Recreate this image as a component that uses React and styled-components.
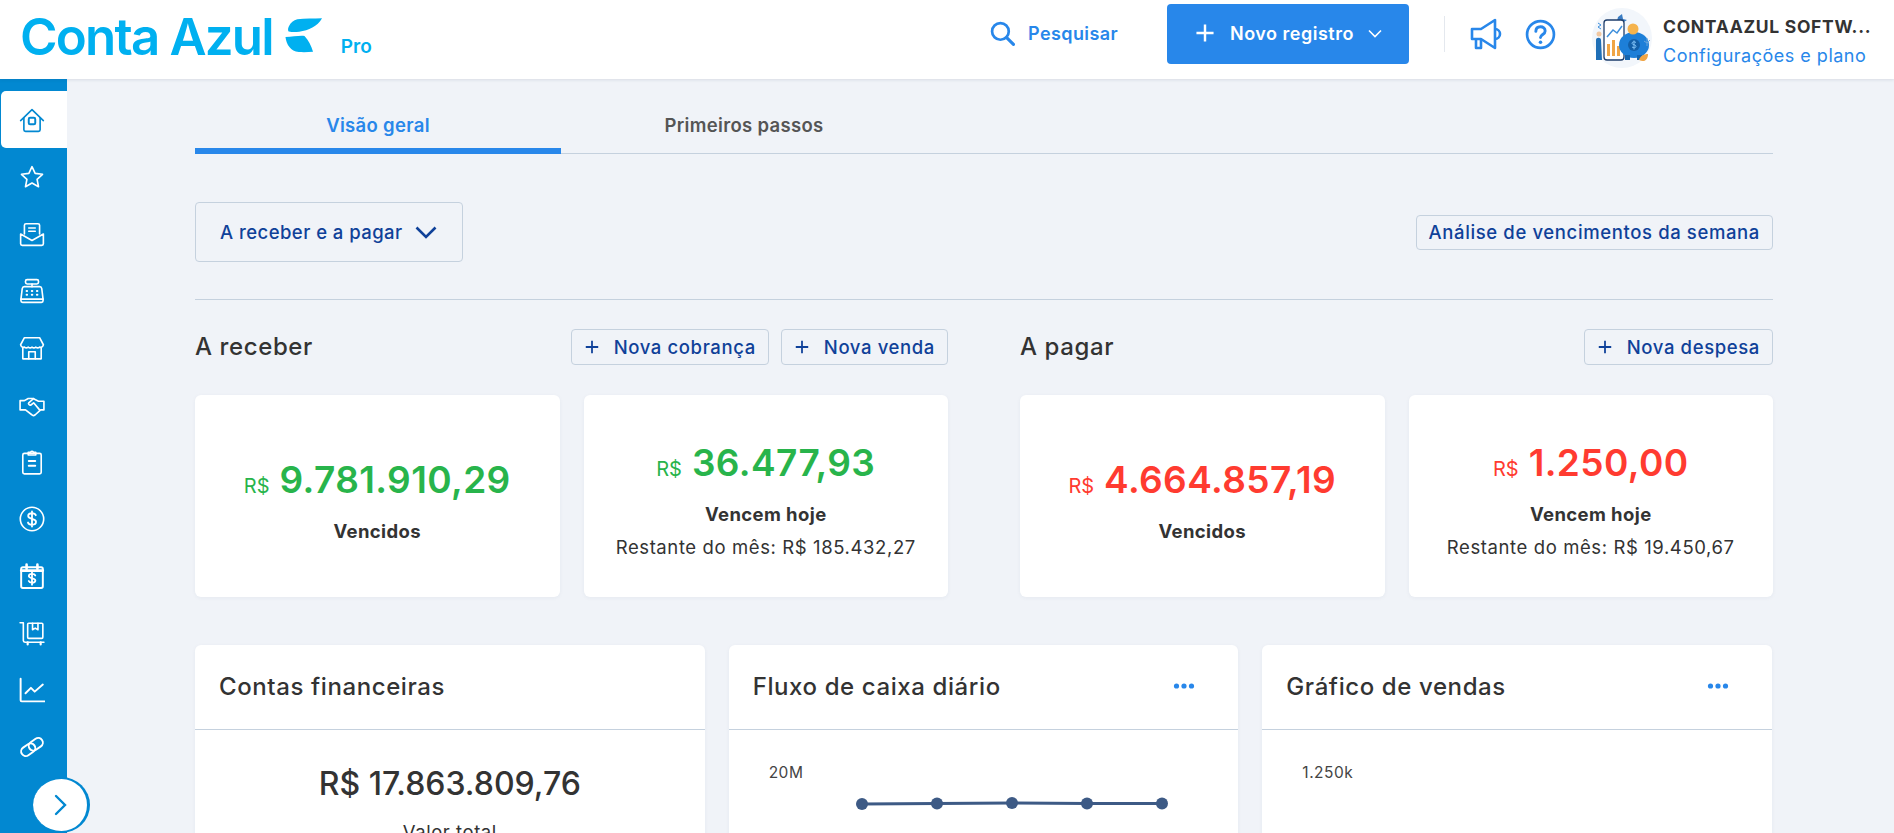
import React from 'react';
import styled, { createGlobalStyle } from 'styled-components';

const Global = createGlobalStyle`
  * { box-sizing: border-box; }
  html, body { margin: 0; padding: 0; height: 100%; overflow: hidden; background: #f0f3f8; }
  body { font-family: Inter, "Noto Sans", sans-serif; color: #333; }
`;

const Page = styled.div`
  height: 833px; overflow: hidden; display: flex; flex-direction: column; position: relative;
`;
const Header = styled.header`
  height: 79px; flex: none; background: #fff; display: flex; align-items: center; position: relative; z-index: 2;
  box-shadow: 0 1px 3px rgba(40,60,90,.12); padding: 0 21px 11px 20px;
`;
const Logo = styled.div`
  display: flex; align-items: center; color: #00b0f0;
`;
const LogoText = styled.span`
  font-size: 51px; font-weight: 600; letter-spacing: -1.8px; line-height: 1; margin-top: 4px;
`;
const LogoMark = styled.svg`
  width: 38px; height: 36px; margin-left: 12px; margin-top: 2px;
`;
const Pro = styled.span`
  font-size: 19px; font-weight: 600; margin-left: 18px; margin-top: 25px;
`;
const HeaderRight = styled.div`
  margin-left: auto; display: flex; align-items: center;
`;
const SearchLink = styled.a`
  display: flex; align-items: center; gap: 13px; color: #2887ea; font-size: 18px; font-weight: 600; letter-spacing: .4px; padding-bottom: 2px;
`;
const PrimaryButton = styled.button`
  margin-left: 49px; width: 242px; height: 60px; background: #2887ea; border: 0; border-radius: 4px; color: #fff;
  font: 600 18px Inter, sans-serif; letter-spacing: .5px; display: flex; align-items: center; justify-content: center; gap: 14px; padding: 0 0 2px;
`;
const VDivider = styled.div`
  width: 1px; height: 36px; background: #e4e8ee; margin: 0 25px 0 35px;
`;
const HeaderIcon = styled.svg`
  width: ${p => p.$w}px; height: ${p => p.$h || p.$w}px; fill: none; stroke: #2887ea; stroke-width: 2.6; margin-right: ${p => p.$mr || 0}px;
`;
const Avatar = styled.svg`
  width: 60px; height: 60px; flex: none; margin-left: 36px; margin-top: 8px;
`;
const Account = styled.div`
  margin-left: 11px; display: flex; flex-direction: column; gap: 7px; width: 210px; margin-top: 14px;
`;
const AccountName = styled.div`
  font-size: 17.5px; font-weight: 700; color: #333; white-space: nowrap; line-height: 22px; letter-spacing: .7px;
`;
const AccountLink = styled.div`
  font-size: 18px; color: #2887ea; white-space: nowrap; line-height: 22px; letter-spacing: .5px;
`;

const Body = styled.div`
  flex: 1; display: flex; min-height: 0;
`;
const Sidebar = styled.nav`
  width: 67px; flex: none; background: #0288d1; padding: 12px 0 0 1px; display: flex; flex-direction: column;
`;
const NavItem = styled.div`
  height: 57px; display: flex; align-items: center; justify-content: center; padding-right: 4px;
  background: ${p => p.$active ? '#fff' : 'transparent'};
  border-radius: ${p => p.$active ? '5px 0 0 5px' : '0'};
  color: ${p => p.$active ? '#0288d1' : '#fff'};
`;
const NavIcon = styled.svg`
  width: 26px; height: 26px; fill: none; stroke: currentColor; stroke-width: 1.5; stroke-linejoin: round; stroke-linecap: round;
`;
const Expand = styled.button`
  position: absolute; left: 33px; top: 777px; width: 57px; height: 56px; border-radius: 50%; background: #fff; border: 0;
  border-right: 3px solid #0288d1; border-top: 2px solid #0288d1; border-bottom: 2px solid #0288d1;
  display: flex; align-items: center; justify-content: center; padding: 0; z-index: 3;
`;

const Main = styled.main`
  flex: 1; padding: 0 121px 0 128px; min-width: 0;
`;
const Tabs = styled.div`
  display: flex; height: 75px; border-bottom: 1px solid #c5d1de;
`;
const Tab = styled.div`
  width: 366px; height: 75px; display: flex; align-items: center; justify-content: center; padding-top: 22px;
  font-size: 18.5px; font-weight: 600; letter-spacing: .32px; color: ${p => p.$active ? '#2887ea' : '#555'};
  border-bottom: 6px solid ${p => p.$active ? '#2887ea' : 'transparent'};
`;
const FilterRow = styled.div`
  display: flex; align-items: center; justify-content: space-between; margin-top: 48px; padding-bottom: 37px; border-bottom: 1px solid #c5d1de;
`;
const FilterButton = styled.button`
  width: 268px; height: 60px; background: transparent; border: 1px solid #c5d1de; border-radius: 4px; color: #0f4199;
  font: 500 18.5px Inter, sans-serif; letter-spacing: .45px; display: flex; align-items: center; justify-content: space-between; padding: 0 25px 0 24px; white-space: nowrap;
`;
const OutlineButton = styled.button`
  height: ${p => p.$tall ? 36 : 35}px; background: transparent; border: 1px solid #c5d1de; border-radius: 4px; color: #0f4199;
  font: 500 18.5px Inter, sans-serif; letter-spacing: .62px; display: flex; align-items: center; gap: 14px; padding: 0 12px; white-space: nowrap;
`;
const Sections = styled.div`
  display: grid; grid-template-columns: 753px 753px; justify-content: space-between; margin-top: 29px;
`;
const SectionHead = styled.div`
  display: flex; align-items: center; gap: 12px; height: 36px;
`;
const SectionTitle = styled.h2`
  margin: 0 auto 0 0; font-size: 24px; font-weight: 500; color: #333; letter-spacing: .6px; padding-bottom: 2px;
`;
const CardPair = styled.div`
  display: grid; grid-template-columns: 1fr 1fr; gap: 24px; margin-top: 30px;
`;
const StatCard = styled.div`
  height: 202px; background: #fff; border-radius: 6px; box-shadow: 0 1px 4px rgba(40,60,90,.05);
  display: flex; flex-direction: column; align-items: center; justify-content: center; padding-top: 8px;
`;
const Amount = styled.div`
  display: flex; align-items: baseline; gap: 10px; color: ${p => p.$color}; font-size: 37px; font-weight: 600; line-height: 42px; letter-spacing: .4px;
`;
const Currency = styled.span`
  font-size: 20px; font-weight: 400; letter-spacing: 0;
`;
const StatLabel = styled.div`
  margin-top: 13px; font-size: 18.5px; font-weight: 700; color: #333; line-height: 22px; letter-spacing: .4px;
`;
const StatNote = styled.div`
  margin-top: 11px; font-size: 18.5px; color: #333; line-height: 22px; letter-spacing: .6px;
`;
const Widgets = styled.div`
  display: grid; grid-template-columns: repeat(3, 1fr); gap: 24px; margin: 48px 1px 0 0;
`;
const Widget = styled.section`
  height: 320px; background: #fff; border-radius: 6px 6px 0 0; box-shadow: 0 1px 4px rgba(40,60,90,.05);
`;
const WidgetHead = styled.div`
  height: 85px; display: flex; align-items: center; justify-content: space-between; padding: 0 43px 2px 24px; border-bottom: 1px solid #c5d1de;
`;
const WidgetTitle = styled.h3`
  margin: 0; font-size: 24px; font-weight: 500; color: #333; letter-spacing: .6px;
`;
const Dots = styled.svg`
  width: 22px; height: 6px; fill: #2887ea;
`;
const Total = styled.div`
  text-align: center; margin-top: 34px; font-size: 32px; font-weight: 500; color: #333; line-height: 40px;
`;
const TotalLabel = styled.div`
  text-align: center; margin-top: 17px; font-size: 18.5px; color: #333; letter-spacing: .55px;
`;
const ChartBox = styled.div`
  padding: 33px 0 0 40px; display: flex; align-items: flex-start;
`;
const AxisLabel = styled.div`
  font-size: 15.5px; color: #444; line-height: 20px; white-space: nowrap; letter-spacing: .5px;
`;
const Line = styled.svg`
  width: 330px; height: 80px; margin-left: 46px; margin-top: -9px; overflow: visible;
`;

const Plus = ({ size = 18, color = '#0f4199' }) => (
  <svg width={size} height={size} viewBox="0 0 18 18" fill="none" stroke={color} strokeWidth="2"><path d="M9 2v14M2 9h14" /></svg>
);

const navIcons = [
  <><path d="M1.500 12.500 12 2.500l10.500 10" /><path d="M4.500 10v11a1.500 1.500 0 0 0 1.500 1.500h12a1.500 1.500 0 0 0 1.500-1.500V10" /><rect x="9" y="10" width="6" height="6" rx="1.200" strokeWidth="1.800" /></>,
  <path d="m12 2.500 2.900 6.200 6.800.8-5 4.700 1.300 6.800-6-3.400-6 3.400 1.300-6.800-5-4.700 6.800-.8z" />,
  <><path d="M5 12V4a1.500 1.500 0 0 1 1.500-1.500h11A1.500 1.500 0 0 1 19 4v8" /><path d="M9 6.500h6M9 9.500h6" /><path d="M1.500 12 12 18l10.500-6v9a1.500 1.500 0 0 1-1.500 1.500H3A1.500 1.500 0 0 1 1.500 21z" /></>,
  <><rect x="6" y="1.500" width="12" height="4" rx="1.500" /><path d="M12 5.500v2.500" /><path d="M5 8h14a2 2 0 0 1 2 1.700l1.200 9.800H1.800L3 9.700A2 2 0 0 1 5 8z" /><path d="M1.800 19.500v1.500a1.500 1.500 0 0 0 1.500 1.500h17.400a1.500 1.500 0 0 0 1.500-1.500v-1.500" /><path d="M7 12h.5M11.800 12h.5M16.500 12h.5M7 15.500h.5M11.800 15.500h.5M16.500 15.500h.5" strokeWidth="1.800" /></>,
  <><path d="M5 2.500h14l3.500 6.500a2.600 2.600 0 0 1-3.500 2.200 2.900 2.900 0 0 1-3.500 0 2.900 2.900 0 0 1-3.500 0 2.900 2.900 0 0 1-3.500 0 2.900 2.900 0 0 1-3.500 0A2.600 2.600 0 0 1 1.500 9z" /><path d="M3.500 11.500v10.500h17V11.500" /><path d="M9 22v-6.500h6V22" /></>,
  <><path d="M1 8h4l3.500-2H13l5 2.500h5v8h-3L15 21c-1.300 1-2.500.8-3.200 0L6 16.500H1z" /><path d="M13.500 6 9 10c-.8 1 .6 2.600 2 2l2.500-2 5.500 6.500" /></>,
  <><rect x="3.500" y="4" width="17" height="19" rx="1.500" /><path d="M8.500 5.500V3h2.200a1.500 1.500 0 0 1 2.600 0h2.200v2.500z" /><path d="M9 11h6M9 15.500h6" strokeWidth="1.800" /></>,
  <><circle cx="12" cy="12" r="10.800" /><path d="M15.500 8.500c-.5-1.200-2-1.800-3.500-1.800-2 0-3.500 1-3.500 2.600 0 3.500 7.200 1.800 7.200 5.300 0 1.700-1.700 2.700-3.700 2.700-1.700 0-3.200-.7-3.700-2M12 5v14" strokeWidth="1.700" /></>,
  <><rect x="2" y="4" width="20" height="19" rx="1.500" strokeWidth="1.800" /><path d="M2 7h20M7 1.500V5M17 1.500V5" strokeWidth="2.400" /><path d="M15 11.500c-.4-1-1.600-1.400-3-1.400-1.600 0-2.900.8-2.900 2 0 2.700 6 1.300 6 4 0 1.300-1.400 2-3.100 2-1.400 0-2.600-.5-3-1.500M12 8.500v11.500" strokeWidth="1.700" /></>,
  <><path d="M1 2.500h3v16.500a1.500 1.500 0 0 0 1.500 1.500H23" /><rect x="8" y="3" width="14" height="14" rx="1" /><path d="M12.500 3v6l2.500-1.500L17.500 9V3" /><path d="M8 20.500v2M20 20.500v2" strokeWidth="2" /></>,
  <><path d="M1.500 1.500v20a1 1 0 0 0 1 1h21" strokeWidth="1.800" /><path d="m6 15 5-5 3.500 3.500L22 7" strokeWidth="1.800" /></>,
  <><rect x="1.500" y="10.250" width="14" height="8.500" rx="4.250" transform="rotate(-35 8.500 14.500)" strokeWidth="1.800" /><rect x="8.500" y="5.250" width="14" height="8.500" rx="4.250" transform="rotate(-35 15.500 9.500)" strokeWidth="1.800" /></>,
];

const LogoLeaf = () => (
  <LogoMark viewBox="0 0 40 36" fill="#00b0f0">
    <path d="M13 1.500c-4 .8-7 3.500-9 7.500-.8 2-1 3-.5 5 .5 1 7.500 1 11.500 .5C25 13 34 9 39 0.300 30 .8 21 0 13 1.500z" />
    <path d="M0.500 20c8 -.5 17 -2 20 -1 4.500 5 7 10 9 16.700-5 .5-11 .5-15 .3C6 35 1.500 28 .5 20z" />
  </LogoMark>
);

const AvatarArt = () => (
  <Avatar viewBox="0 0 60 60">
    <circle cx="30" cy="30" r="30" fill="#f2f6fb" />
    <path d="M26 9l4-3 1 5 4 1-5 3-5-2z" fill="#3a7cc2" />
    <rect x="12" y="12" width="20" height="40" rx="3" fill="#fff" stroke="#1d3d6b" strokeWidth="1.300" />
    <path d="M15 29l6-7 4 3 5-7" fill="none" stroke="#3d8fdc" strokeWidth="1.500" />
    <path d="M15 48V36h3v12zM20 48V32h3v16zM25 48V38h3v10z" fill="#f0a545" />
    <path d="M4 52V32c0-3 5-3 5 0l1 20z" fill="#1f6fb7" />
    <circle cx="7" cy="26" r="2.500" fill="#f1c7a0" />
    <ellipse cx="42" cy="37" rx="15" ry="13" fill="#1d7fd8" />
    <path d="M33 47h5v5h-5zM45 47h5v5h-5z" fill="#1465b0" />
    <circle cx="41" cy="21" r="5.500" fill="#f5b34c" />
    <circle cx="42" cy="37" r="6" fill="#125fa8" />
    <path d="M44 34.500c-1-1-4-1-4 .8s4 1 4 3-3 1.500-4 .7M42 32.500v9" stroke="#7fc0f5" strokeWidth="1" fill="none" />
    <path d="M47 52c1-4 5-6 9-6 0 5-3 9-9 6z" fill="#f0a545" />
    <path d="M55 30v8M52 33l3 2M58 32l-3 3" stroke="#6aa7dc" strokeWidth="1" fill="none" />
    <path d="M6 15l3 2-3 2 3 2" stroke="#3d8fdc" strokeWidth="1" fill="none" />
  </Avatar>
);

const stat = (value, color, label, note) => (
  <StatCard>
    <Amount $color={color}><Currency>R$</Currency>{value}</Amount>
    <StatLabel>{label}</StatLabel>
    {note && <StatNote>{note}</StatNote>}
  </StatCard>
);

const MoreDots = () => (
  <Dots viewBox="0 0 22 6"><circle cx="3.500" cy="3" r="2.600" /><circle cx="11" cy="3" r="2.600" /><circle cx="18.500" cy="3" r="2.600" /></Dots>
);

export default function App() {
  return (
    <Page>
      <Global />
      <Header>
        <Logo>
          <LogoText>Conta Azul</LogoText>
          <LogoLeaf />
          <Pro>Pro</Pro>
        </Logo>
        <HeaderRight>
          <SearchLink>
            <HeaderIcon $w={25} viewBox="0 0 24 24" strokeLinecap="round"><circle cx="10" cy="10" r="8" /><path d="m16 16 6.500 6.500" strokeWidth="3" /></HeaderIcon>
            Pesquisar
          </SearchLink>
          <PrimaryButton>
            <Plus size={22} color="#fff" />
            Novo registro
            <svg width="14" height="9" viewBox="0 0 14 9" fill="none" stroke="#fff" strokeWidth="1.600"><path d="m1 1.500 6 6 6-6" /></svg>
          </PrimaryButton>
          <VDivider />
          <HeaderIcon $w={32} $h={34} $mr={23} viewBox="0 0 32 34" strokeLinejoin="round"><path d="M2 12h9l14-9v28l-14-9H2z" /><path d="M6 22v9h5v-9" /><path d="M25 12c3 0 5 2.500 5 5s-2 5-5 5" /></HeaderIcon>
          <HeaderIcon $w={31} viewBox="0 0 30 30" strokeLinecap="round"><circle cx="15" cy="15" r="13" /><path d="M10.500 12c0-3 2-4.500 4.500-4.500s4.500 1.500 4.500 4c0 3.500-4.500 3.500-4.500 6.500" strokeWidth="2.800" /><path d="M15 22.500v.1" strokeWidth="3.400" /></HeaderIcon>
          <AvatarArt />
          <Account>
            <AccountName>CONTAAZUL SOFTW...</AccountName>
            <AccountLink>Configurações e plano</AccountLink>
          </Account>
        </HeaderRight>
      </Header>
      <Body>
        <Sidebar>
          {navIcons.map((icon, i) => (
            <NavItem key={i} $active={i === 0}><NavIcon viewBox="0 0 24 24">{icon}</NavIcon></NavItem>
          ))}
        </Sidebar>
        <Main>
          <Tabs>
            <Tab $active>Visão geral</Tab>
            <Tab>Primeiros passos</Tab>
          </Tabs>
          <FilterRow>
            <FilterButton>
              A receber e a pagar
              <svg width="22" height="13" viewBox="0 0 22 13" fill="none" stroke="#0f4199" strokeWidth="2.600"><path d="m1.500 1.500 9.500 9.500 9.500-9.500" /></svg>
            </FilterButton>
            <OutlineButton>Análise de vencimentos da semana</OutlineButton>
          </FilterRow>
          <Sections>
            <div>
              <SectionHead>
                <SectionTitle>A receber</SectionTitle>
                <OutlineButton $tall><Plus size={16} />Nova cobrança</OutlineButton>
                <OutlineButton $tall><Plus size={16} />Nova venda</OutlineButton>
              </SectionHead>
              <CardPair>
                {stat('9.781.910,29', '#28b44b', 'Vencidos')}
                {stat('36.477,93', '#28b44b', 'Vencem hoje', 'Restante do mês: R$ 185.432,27')}
              </CardPair>
            </div>
            <div>
              <SectionHead>
                <SectionTitle>A pagar</SectionTitle>
                <OutlineButton $tall><Plus size={16} />Nova despesa</OutlineButton>
              </SectionHead>
              <CardPair>
                {stat('4.664.857,19', '#ff3b30', 'Vencidos')}
                {stat('1.250,00', '#ff3b30', 'Vencem hoje', 'Restante do mês: R$ 19.450,67')}
              </CardPair>
            </div>
          </Sections>
          <Widgets>
            <Widget>
              <WidgetHead><WidgetTitle>Contas financeiras</WidgetTitle></WidgetHead>
              <Total>R$ 17.863.809,76</Total>
              <TotalLabel>Valor total</TotalLabel>
            </Widget>
            <Widget>
              <WidgetHead><WidgetTitle>Fluxo de caixa diário</WidgetTitle><MoreDots /></WidgetHead>
              <ChartBox>
                <AxisLabel>20M</AxisLabel>
                <Line viewBox="0 0 330 80">
                  <path d="M13 50 L88 49.500 L163 49 L238 49.500 L313 49.500" fill="none" stroke="#3d5a85" strokeWidth="3" />
                  {[[13,50],[88,49.500],[163,49],[238,49.500],[313,49.500]].map(([x,y]) => <circle key={x} cx={x} cy={y} r="6" fill="#3d5a85" />)}
                </Line>
              </ChartBox>
            </Widget>
            <Widget>
              <WidgetHead><WidgetTitle>Gráfico de vendas</WidgetTitle><MoreDots /></WidgetHead>
              <ChartBox><AxisLabel>1.250k</AxisLabel></ChartBox>
            </Widget>
          </Widgets>
        </Main>
      </Body>
      <Expand aria-label="Expandir">
        <svg width="13" height="22" viewBox="0 0 13 22" fill="none" stroke="#0288d1" strokeWidth="2.400" strokeLinecap="round"><path d="m2 2 9 9-9 9" /></svg>
      </Expand>
    </Page>
  );
}
